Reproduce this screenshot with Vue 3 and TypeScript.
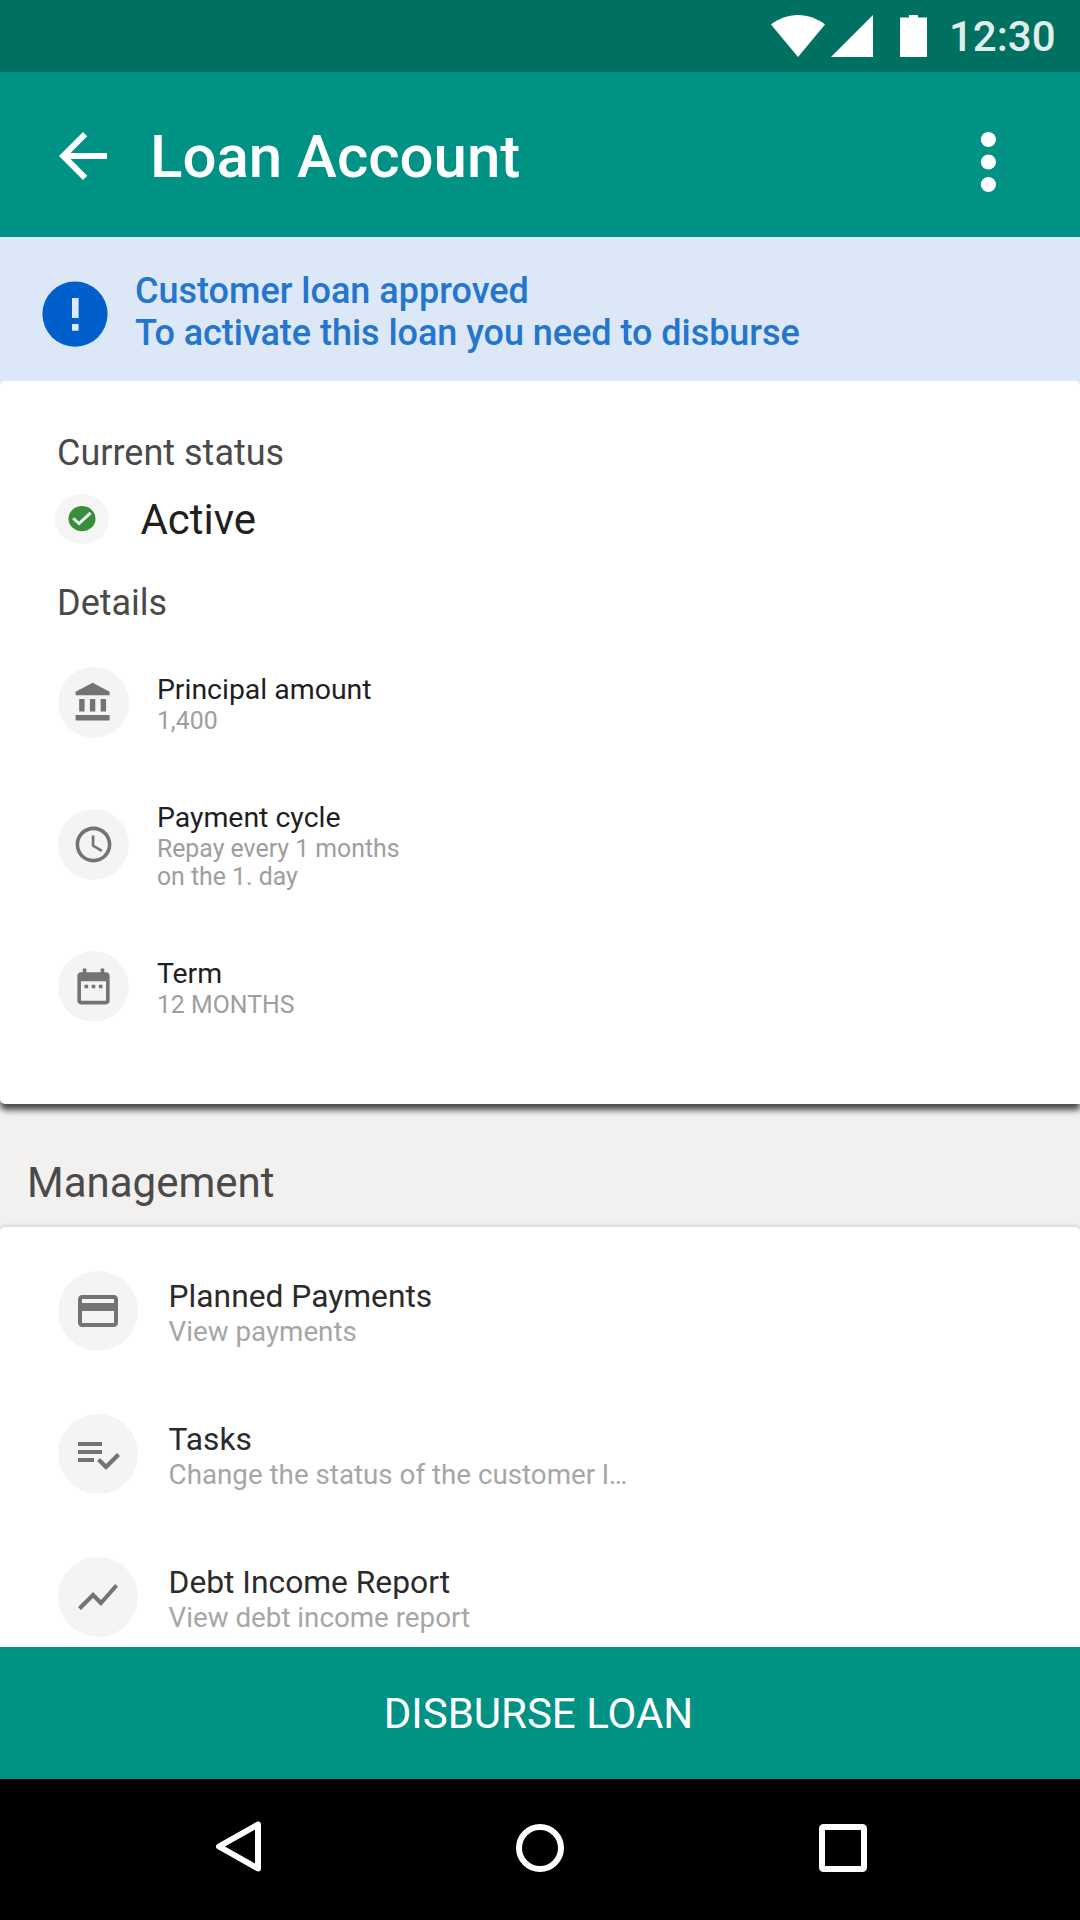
<script setup lang="ts">
interface Entry {
  title: string
  lines: string[]
  path: string
}

const details: Entry[] = [
  {
    title: 'Principal amount',
    lines: ['1,400'],
    path: 'M4 10v7h3v-7H4zm6 0v7h3v-7h-3zM2 22h19v-3H2v3zm14-12v7h3v-7h-3zm-4.5-9L2 6v2h19V6l-9.5-5z',
  },
  {
    title: 'Payment cycle',
    lines: ['Repay every 1 months', 'on the 1. day'],
    path: 'M11.99 2C6.47 2 2 6.48 2 12s4.47 10 9.99 10C17.52 22 22 17.52 22 12S17.52 2 11.99 2zM12 20c-4.42 0-8-3.58-8-8s3.58-8 8-8 8 3.58 8 8-3.58 8-8 8zm.5-13H11v6l5.25 3.15.75-1.23-4.5-2.67z',
  },
  {
    title: 'Term',
    lines: ['12 MONTHS'],
    path: 'M9 11H7v2h2v-2zm4 0h-2v2h2v-2zm4 0h-2v2h2v-2zm2-7h-1V2h-2v2H8V2H6v2H5c-1.11 0-1.99.9-1.99 2L3 20c0 1.1.89 2 2 2h14c1.1 0 2-.9 2-2V6c0-1.1-.9-2-2-2zm0 16H5V9h14v11z',
  },
]

const management: Entry[] = [
  {
    title: 'Planned Payments',
    lines: ['View payments'],
    path: 'M20 4H4c-1.11 0-1.99.89-1.99 2L2 18c0 1.11.89 2 2 2h16c1.11 0 2-.89 2-2V6c0-1.11-.89-2-2-2zm0 14H4v-6h16v6zm0-10H4V6h16v2z',
  },
  {
    title: 'Tasks',
    lines: ['Change the status of the customer l…'],
    path: 'M14 10H2v2h12v-2zm0-4H2v2h12V6zM2 16h8v-2H2v2zm19.5-4.5L23 13l-6.99 7-4.51-4.5L13 14l3.01 3 5.49-5.5z',
  },
  {
    title: 'Debt Income Report',
    lines: ['View debt income report'],
    path: 'M3.5 18.49l6-6.01 4 4L22 6.92l-1.41-1.41-7.09 7.97-4-4L2 16.99z',
  },
]
</script>

<template>
  <div class="screen">
    <div class="status-bar">
      <svg class="signals" width="156" height="42" viewBox="0 0 156 42" fill="#fff">
        <path d="M0 9.4C7.6 3.6 17 0 27 0s19.4 3.6 27 9.4L27 42z" />
        <path d="M60 42H102V0z" />
        <path d="M129 2.6h9V0h9v2.6h9V42h-27z" />
      </svg>
      <span class="clock">12:30</span>
    </div>

    <header class="app-bar">
      <svg class="back" width="72" height="72" viewBox="0 0 24 24" fill="#fff">
        <path d="M20 11H7.83l5.59-5.59L12 4l-8 8 8 8 1.41-1.41L7.83 13H20v-2z" />
      </svg>
      <h1>Loan Account</h1>
      <svg class="more" width="16" height="61" viewBox="0 0 16 61" fill="#fff">
        <circle cx="8.4" cy="7.5" r="7.6" />
        <circle cx="8.4" cy="30" r="7.6" />
        <circle cx="8.4" cy="52.5" r="7.6" />
      </svg>
    </header>

    <div class="banner">
      <svg class="alert" width="66" height="66" viewBox="0 0 66 66">
        <circle cx="33" cy="33.1" r="32.600" fill="#005fcb" />
        <path d="M30 17h6.600V37H30zM30 43h6.600v6.800H30z" fill="#dde8f7" />
      </svg>
      <p>Customer loan approved<br /><span class="tight">To activate this loan you need to disburse</span></p>
    </div>

    <main>
      <section class="card summary">
        <h2>Current status</h2>
        <div class="status">
          <svg width="54" height="50" viewBox="0 0 54 50">
            <ellipse cx="27" cy="25" rx="27" ry="25" fill="#f5f5f5" />
            <ellipse cx="27" cy="24.700" rx="13.500" ry="12.600" fill="#388e3c" />
            <path d="M18.200 24.200l5.800 5.300L35.600 18.900" fill="none" stroke="#f5f5f5" stroke-width="2.900" />
          </svg>
          <span>Active</span>
        </div>
        <h2 class="details-title">Details</h2>
        <ul class="rows">
          <li v-for="item in details" :key="item.title">
            <span class="disc"><svg viewBox="0 0 24 24"><path :d="item.path" /></svg></span>
            <div class="text">
              <strong>{{ item.title }}</strong>
              <span v-for="line in item.lines" :key="line">{{ line }}</span>
            </div>
          </li>
        </ul>
      </section>

      <h2 class="section-title">Management</h2>

      <section class="card manage">
        <ul class="rows large">
          <li v-for="item in management" :key="item.title">
            <span class="disc"><svg viewBox="0 0 24 24"><path :d="item.path" /></svg></span>
            <div class="text">
              <strong>{{ item.title }}</strong>
              <span v-for="line in item.lines" :key="line">{{ line }}</span>
            </div>
          </li>
        </ul>
      </section>
    </main>

    <button class="disburse" type="button">DISBURSE LOAN</button>

    <nav class="nav-bar">
      <svg width="1080" height="141" viewBox="0 0 1080 141" fill="none" stroke="#fff" stroke-width="6" stroke-linejoin="round">
        <path d="M258 45.500V89.500L219 67.500z" />
        <circle cx="540" cy="69" r="21" />
        <rect x="822" y="48" width="42" height="42" rx="1.500" />
      </svg>
    </nav>
  </div>
</template>

<style>
body {
  margin: 0;
}
</style>

<style scoped>
.screen {
  width: 1080px;
  height: 1920px;
  display: flex;
  flex-direction: column;
  overflow: hidden;
  background: #f2f1ef;
  font-family: Roboto, "Liberation Sans", sans-serif;
}

h1,
h2,
p,
ul {
  margin: 0;
  padding: 0;
  font-weight: 400;
}

svg {
  display: block;
  flex: none;
}

.status-bar {
  flex: none;
  height: 72px;
  display: flex;
  align-items: flex-start;
  background: #007060;
}

.signals {
  margin: 15px 0 0 771px;
}

.clock {
  margin: 12px 0 0 22px;
  font-size: 42px;
  font-weight: 500;
  line-height: 49px;
  color: rgba(255, 255, 255, 0.9);
}

.app-bar {
  flex: none;
  height: 165px;
  display: flex;
  align-items: flex-start;
  background: #009284;
}

.back {
  margin: 48px 0 0 47px;
}

.app-bar h1 {
  flex: 1;
  margin: 49px 0 0 31px;
  font-size: 60px;
  font-weight: 500;
  line-height: 71px;
  color: #fff;
}

.more {
  margin: 60px 84px 0 0;
  overflow: visible;
}

.banner {
  flex: none;
  height: 144px;
  display: flex;
  align-items: flex-start;
  background: #dce7f7;
}

.alert {
  margin: 44px 0 0 42px;
}

.banner p {
  margin: 33px 0 0 27px;
  font-size: 36px;
  font-weight: 500;
  line-height: 42px;
  color: #2475ce;
  white-space: nowrap;
}

.tight {
  letter-spacing: -0.04px;
}

main {
  flex: 1;
  min-height: 0;
  overflow: hidden;
}

.card {
  background: #fff;
  border-radius: 5px;
  box-sizing: border-box;
}

.summary {
  height: 723px;
  padding: 51px 0 0 57px;
  border-bottom-right-radius: 0;
  box-shadow: 0 5.5px 6px rgba(0, 0, 0, 0.7);
}

.summary h2 {
  font-size: 36px;
  line-height: 42px;
  color: #4a4a4a;
}

.status {
  display: flex;
  height: 50px;
  margin: 20px 0 0 -2px;
}

.status span {
  margin: 1px 0 0 31.4px;
  font-size: 42px;
  line-height: 49px;
  color: #1f1f1f;
}

.summary .details-title {
  margin: 38px 0 7px;
}

.rows {
  list-style: none;
}

.rows li {
  height: 142.3px;
  display: flex;
  align-items: center;
  gap: 28px;
}

.disc {
  flex: none;
  width: 71px;
  height: 71px;
  margin-left: 0.9px;
  border-radius: 50%;
  background: #f4f4f4;
  display: flex;
  align-items: center;
  justify-content: center;
}

.disc svg {
  width: 43px;
  height: 43px;
  fill: #737373;
}

.text {
  display: flex;
  flex-direction: column;
  padding-top: 4px;
  white-space: nowrap;
}

.text strong {
  font-size: 28.45px;
  font-weight: 400;
  line-height: 33px;
  color: #1f1f1f;
}

.text span {
  font-size: 24.85px;
  line-height: 28.5px;
  color: #9e9e9e;
}

.text strong + span {
  padding-top: 1px;
}

.section-title {
  margin: 54px 0 20px 27px;
  font-size: 42px;
  line-height: 49px;
  color: #4a4a4a;
}

.manage {
  height: 450px;
  padding: 13px 0 0 57px;
  box-shadow: 0 0 5px rgba(0, 0, 0, 0.22);
}

.large li {
  height: 142.7px;
  gap: 30.7px;
}

.large .disc {
  width: 80px;
  height: 80px;
}

.large .disc svg {
  width: 48px;
  height: 48px;
}

.large .text strong {
  font-size: 31.75px;
  line-height: 37px;
  color: #2b2b2b;
}

.large .text span {
  font-size: 27.75px;
  line-height: 33px;
  color: #a6a6a6;
}

.large .text strong + span {
  padding-top: 0;
}

.disburse {
  flex: none;
  height: 132px;
  margin: 0;
  padding: 0 3px 0 0;
  border: 0;
  background: #009284;
  color: #fff;
  font: 400 42px/49px Roboto, "Liberation Sans", sans-serif;
}

.nav-bar {
  flex: none;
  height: 141px;
  background: #000;
}
</style>
